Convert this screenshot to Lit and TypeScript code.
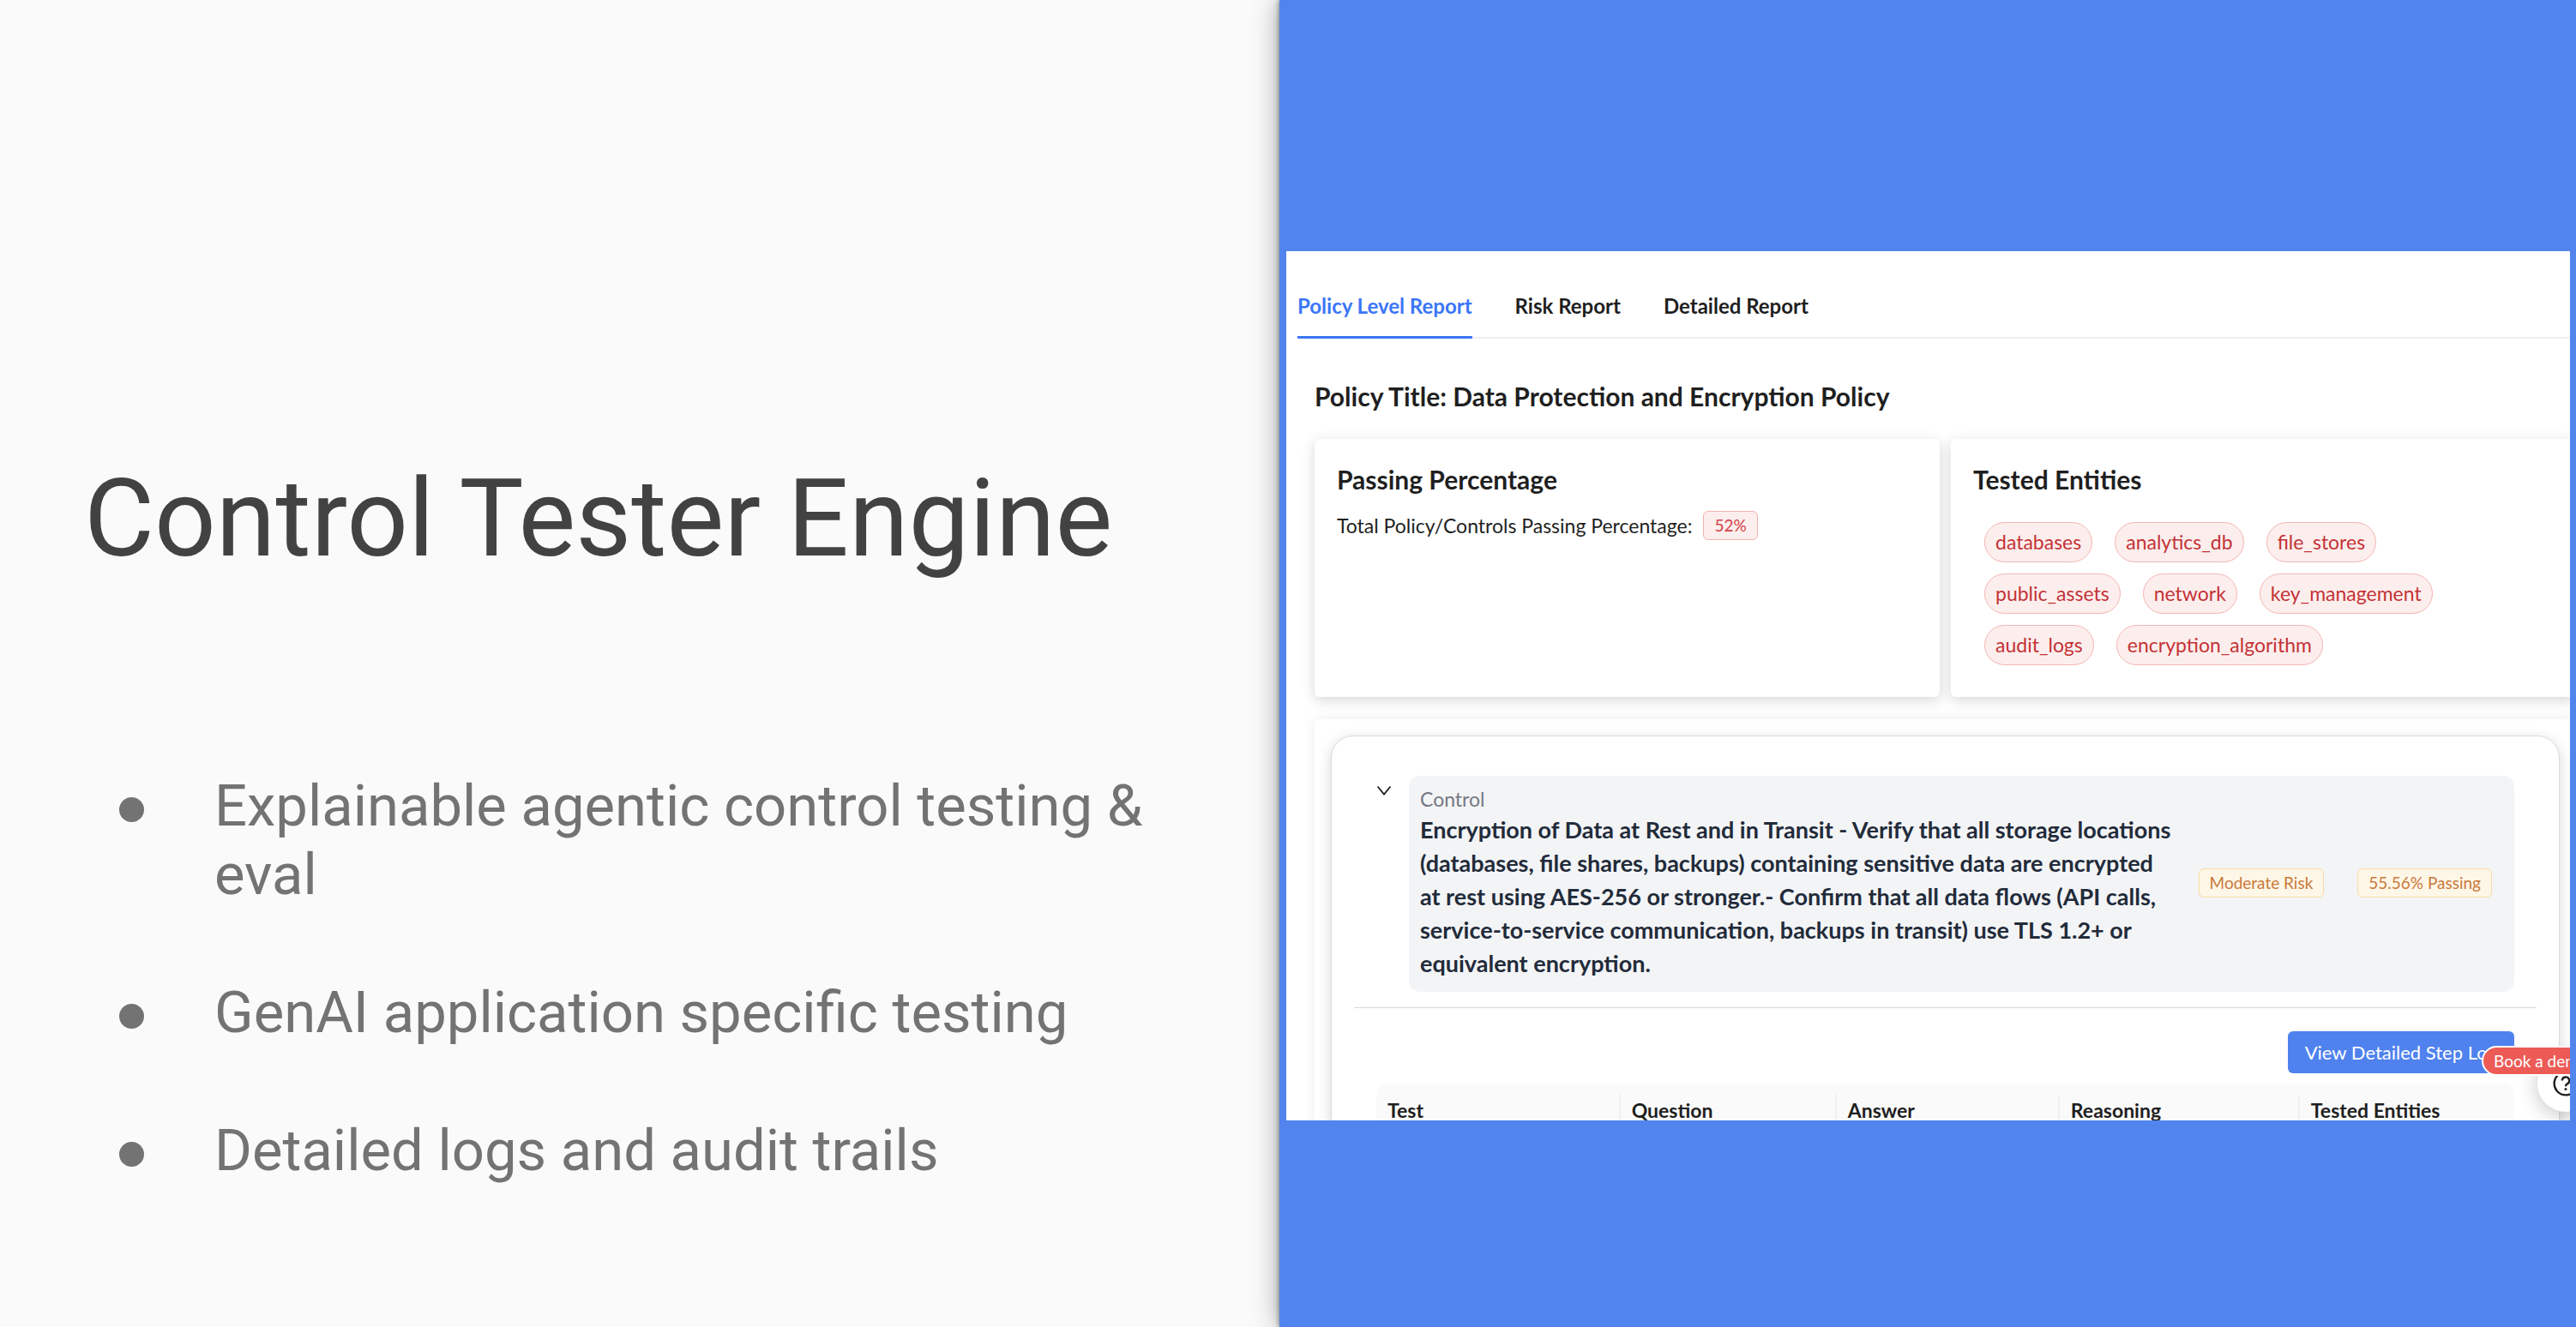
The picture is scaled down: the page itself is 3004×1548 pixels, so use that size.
import { LitElement, html, css } from "lit";
import { customElement } from "lit/decorators.js";

const POINTS = [
  "Explainable agentic control testing & eval",
  "GenAI application specific testing",
  "Detailed logs and audit trails",
];

const TABS = ["Policy Level Report", "Risk Report", "Detailed Report"];

const ENTITIES = [
  ["databases", "analytics_db", "file_stores"],
  ["public_assets", "network", "key_management"],
  ["audit_logs", "encryption_algorithm"],
];

const COLUMNS = ["Test", "Question", "Answer", "Reasoning", "Tested Entities"];

@customElement("policy-report")
export class PolicyReport extends LitElement {
  static styles = css`
    :host {
      display: block;
      position: relative;
      overflow: hidden;
      background: #ffffff;
      color: #1f1f1f;
      font-family: Lato, "Liberation Sans", sans-serif;
      font-size: 23px;
      line-height: 36px;
    }
    button {
      font: inherit;
      border: 0;
      padding: 0;
      margin: 0;
      background: none;
      color: inherit;
    }
    h2,
    h3,
    p {
      margin: 0;
    }
    .tabs {
      display: flex;
      gap: 50px;
      margin-left: 13px;
      padding-top: 46px;
      border-bottom: 2px solid #f0f0f0;
    }
    .tab {
      height: 56px;
      padding-bottom: 18px;
      margin-bottom: -2px;
      font-size: 24px;
      font-weight: 700;
      border-bottom: 3px solid transparent;
    }
    .tab.active {
      color: #3b76f6;
      border-bottom-color: #3b76f6;
    }
    .body {
      padding-left: 33px;
      margin-right: -7px;
    }
    h2,
    h3 {
      font-size: 30px;
      line-height: 40px;
      font-weight: 700;
    }
    h2 {
      padding-top: 47px;
      padding-bottom: 30px;
    }
    .summary {
      display: grid;
      grid-template-columns: 1fr 1fr;
      gap: 13px;
    }
    .card {
      background: #ffffff;
      border-radius: 6px;
      box-shadow: 0 4px 16px rgba(0, 0, 0, 0.16);
      padding: 27px 26px 37px;
    }
    .line {
      display: flex;
      align-items: center;
      gap: 13px;
      padding-top: 16px;
    }
    .tag {
      font-size: 19px;
      line-height: 32px;
      padding: 0 12px;
      border-radius: 6px;
      border: 1px solid #f9dba5;
      background: #fef6e7;
      color: #c9793a;
      white-space: nowrap;
    }
    .tag.bad {
      border-color: #f3b3ae;
      background: #fceeed;
      color: #cf4044;
    }
    .pills {
      display: grid;
      gap: 13px;
      padding: 30px 13px 0;
    }
    .pillrow {
      display: flex;
      gap: 26px;
    }
    .pill {
      line-height: 45px;
      padding: 0 12px;
      border: 1px solid #f5b5b0;
      border-radius: 24px;
      background: #fceeed;
      color: #c43236;
    }
    .controls {
      margin-top: 26px;
      padding: 19px 19px 0;
      border-radius: 6px;
      box-shadow: 0 0 16px rgba(0, 0, 0, 0.08);
    }
    .control {
      border: 1px solid #dcdcdc;
      border-radius: 26px;
      box-shadow: 0 4px 16px rgba(0, 0, 0, 0.16);
      padding: 0 26px 80px;
      background: #ffffff;
    }
    .head {
      display: flex;
      align-items: flex-start;
      gap: 20px;
      padding: 46px 26px 18px;
      border-bottom: 1px solid #d9d9d9;
    }
    .toggle {
      flex: none;
      width: 18px;
      height: 36px;
    }
    .toggle svg,
    .help svg {
      display: block;
    }
    .desc {
      flex: 1;
      display: flex;
      align-items: center;
      gap: 26px;
      padding: 11px 26px 14px 13px;
      border-radius: 13px;
      background: #f3f4f6;
    }
    .words {
      flex: 1;
    }
    .label {
      color: #747883;
      line-height: 32px;
    }
    .name {
      font-size: 27px;
      line-height: 39px;
      font-weight: 700;
      color: #222b3a;
    }
    .tags {
      display: flex;
      gap: 39px;
    }
    .detail {
      padding: 27px 26px 0;
    }
    .actions {
      display: flex;
      justify-content: flex-end;
      padding-bottom: 12px;
    }
    .log {
      height: 49px;
      padding: 0 20px;
      border-radius: 6px;
      background: #4f82ee;
      color: #ffffff;
      font-size: 22px;
    }
    table {
      width: 100%;
      table-layout: fixed;
      border-collapse: separate;
      border-spacing: 0;
      background: #fafafa;
      border-radius: 13px 13px 0 0;
    }
    th {
      padding: 13px 0;
      text-align: left;
      font-weight: 700;
    }
    .cell {
      display: block;
      padding-left: 13px;
      line-height: 36px;
    }
    th + th .cell {
      border-left: 2px solid #f0f0f0;
    }
    .c0 {
      width: 21.3%;
    }
    .c1 {
      width: 19%;
    }
    .c2 {
      width: 19.6%;
    }
    .c3 {
      width: 21.1%;
    }
    .help {
      position: absolute;
      right: -28px;
      bottom: 10px;
      width: 66px;
      height: 66px;
      display: grid;
      place-items: center;
      border-radius: 50%;
      background: #ffffff;
      box-shadow: 0 4px 24px rgba(0, 0, 0, 0.24);
    }
    .demo {
      position: absolute;
      left: calc(100% - 103px);
      bottom: 52px;
      height: 35px;
      padding: 0 12px;
      border: 2px solid #ffffff;
      border-radius: 18px;
      background: #ec5b56;
      color: #ffffff;
      font-size: 19px;
      line-height: 30px;
      white-space: nowrap;
    }
  `;

  render() {
    return html`
      <nav class="tabs" role="tablist">
        ${TABS.map(
          (t, i) =>
            html`<button class="tab ${i === 0 ? "active" : ""}" role="tab" aria-selected=${i === 0 ? "true" : "false"}>${t}</button>`
        )}
      </nav>
      <div class="body">
        <h2>Policy Title: Data Protection and Encryption Policy</h2>
        <div class="summary">
          <section class="card">
            <h3>Passing Percentage</h3>
            <p class="line">Total Policy/Controls Passing Percentage: <span class="tag bad">52%</span></p>
          </section>
          <section class="card">
            <h3>Tested Entities</h3>
            <div class="pills">
              ${ENTITIES.map(
                (row) => html`<div class="pillrow">${row.map((e) => html`<span class="pill">${e}</span>`)}</div>`
              )}
            </div>
          </section>
        </div>
        <div class="controls">
          <section class="control">
            <div class="head">
              <button class="toggle" aria-label="Collapse control">
                <svg width="18" height="36" viewBox="0 0 18 36" fill="none" stroke="#1f1f1f" stroke-width="1.8">
                  <path d="M1.5 12.5 9 21.5 16.5 12.5" />
                </svg>
              </button>
              <div class="desc">
                <div class="words">
                  <p class="label">Control</p>
                  <p class="name">
                    Encryption of Data at Rest and in Transit - Verify that all storage locations (databases, file
                    shares, backups) containing sensitive data are encrypted at rest using AES-256 or stronger.- Confirm
                    that all data flows (API calls, service-to-service communication, backups in transit) use TLS 1.2+
                    or equivalent encryption.
                  </p>
                </div>
                <div class="tags"><span class="tag">Moderate Risk</span><span class="tag">55.56% Passing</span></div>
              </div>
            </div>
            <div class="detail">
              <div class="actions"><button class="log">View Detailed Step Log</button></div>
              <table>
                <thead>
                  <tr>
                    ${COLUMNS.map((c, i) => html`<th class="c${i}" scope="col"><span class="cell">${c}</span></th>`)}
                  </tr>
                </thead>
              </table>
            </div>
          </section>
        </div>
      </div>
      <button class="help" aria-label="Help">
        <svg width="32" height="32" viewBox="0 0 32 32" fill="none" stroke="#1f1f1f" stroke-width="2.4">
          <circle cx="16" cy="16" r="13.4" />
          <path d="M11.8 12.6a4.2 4.2 0 1 1 6 3.8c-1.2.6-1.8 1.3-1.8 2.8" />
          <circle cx="16" cy="22.6" r="1.5" fill="#1f1f1f" stroke="none" />
        </svg>
      </button>
      <button class="demo">Book a demo</button>
    `;
  }
}

@customElement("app-root")
export class AppRoot extends LitElement {
  static styles = css`
    :host {
      display: grid;
      grid-template-columns: 1492fr 1512fr;
      min-height: 100vh;
      overflow: hidden;
      background: #fafafa;
      font-family: Roboto, "Liberation Sans", sans-serif;
    }
    .talk {
      padding: 531px 96px 0 98px;
    }
    h1 {
      margin: 0;
      font-size: 126px;
      line-height: 148px;
      font-weight: 400;
      color: #424242;
    }
    ul {
      list-style: none;
      display: grid;
      gap: 81px;
      margin: 221px 0 0;
      padding: 0 0 0 41px;
      font-size: 67px;
      line-height: 80px;
      color: #737373;
    }
    li {
      display: flex;
      gap: 82px;
    }
    li::before {
      content: "";
      flex: none;
      width: 29px;
      height: 29px;
      margin-top: 30px;
      border-radius: 50%;
      background: currentColor;
    }
    .shot {
      position: relative;
      display: flex;
      align-items: center;
      padding: 52px 7px 0 8px;
      background: #5284ed;
      box-shadow: 0 0 30px rgba(0, 0, 0, 0.36), 0 0 6px rgba(0, 0, 0, 0.5);
    }
    policy-report {
      flex: 1;
      min-width: 0;
      aspect-ratio: 1497 / 1014;
    }
  `;

  render() {
    return html`
      <section class="talk">
        <h1>Control Tester Engine</h1>
        <ul>
          ${POINTS.map((p) => html`<li><span>${p}</span></li>`)}
        </ul>
      </section>
      <section class="shot"><policy-report></policy-report></section>
    `;
  }
}
